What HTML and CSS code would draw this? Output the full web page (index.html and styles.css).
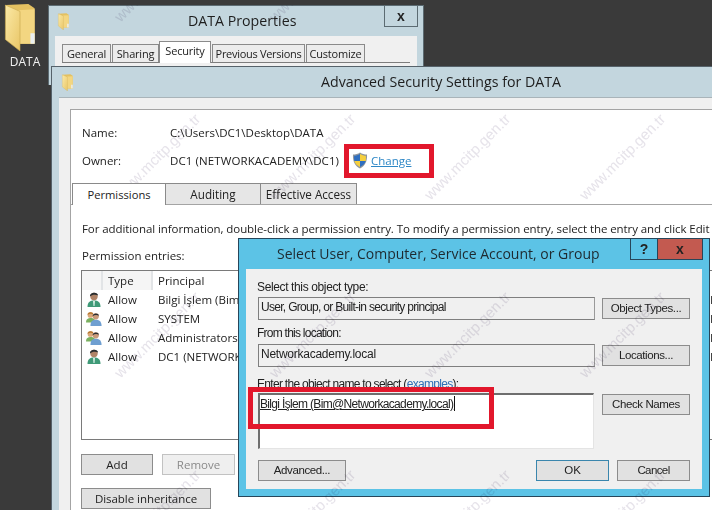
FILE: index.html
```html
<!DOCTYPE html>
<html lang="en">
<head>
<meta charset="utf-8">
<title>Advanced Security Settings for DATA</title>
<link rel="stylesheet" href="styles.css">
</head>
<body>
<svg class="defs" width="0" height="0" aria-hidden="true">
  <defs>
    <linearGradient id="fold" x1="0" y1="0" x2="1" y2="1">
      <stop offset="0" stop-color="#fbe9a6"/>
      <stop offset="1" stop-color="#e9c667"/>
    </linearGradient>
    <symbol id="folder" viewBox="0 0 30 46">
      <path d="M1 2 L23 1 L29 5 L29 39 L11 39 Z" fill="#e4c161"/>
      <path d="M13 7 L29 6 L29 39 L13 39 Z" fill="#f3d681"/>
      <path d="M1 2 L15 8 L15 46 L1 35 Z" fill="url(#fold)" stroke="#c9a94e" stroke-width=".6"/>
      <rect x="25" y="29" width="4" height="10" fill="#e9eef0"/>
    </symbol>
    <symbol id="user" viewBox="0 0 16 17">
      <path d="M1.500 16 C1.500 11 4 9.500 8 9.500 C12 9.500 14.500 11 14.500 16 Z" fill="#3f9a78"/>
      <path d="M7 10 L9 10 L8.500 15 L7.500 15 Z" fill="#d9efe6"/>
      <circle cx="8" cy="5.500" r="3.700" fill="#b08468"/>
      <path d="M4 5.500 C3.500 1 12 .5 12 4.500 C10 3.500 6 3.500 4 5.500 Z" fill="#2a2e31"/>
    </symbol>
    <symbol id="group" viewBox="0 0 18 17">
      <path d="M0 13 C0 9 2.500 8 5.500 8 C8.500 8 10.500 9 10.500 13 Z" fill="#7ab05f"/>
      <circle cx="5" cy="4.500" r="3.200" fill="#d9a778"/>
      <path d="M1.800 4.500 C1.500 .5 8.500 .5 8.300 4 C6.500 2.800 3.500 3 1.800 4.500 Z" fill="#b7782f"/>
      <path d="M5 17 C5 11.500 7.500 10 11 10 C14.500 10 17.500 11.500 17.500 17 Z" fill="#6f9fd1"/>
      <circle cx="11" cy="6" r="3.500" fill="#c99a7a"/>
      <path d="M7.500 6 C7 2 14.500 1.500 14.500 5.500 C12.500 4.300 9.500 4.300 7.500 6 Z" fill="#2a2e31"/>
    </symbol>
  </defs>
</svg>

<div class="desktop-icon">
  <svg class="folder-large"><use href="#folder"/></svg>
  <span>DATA</span>
</div>

<section class="window props">
  <header class="title props-title">
    <svg class="folder-small"><use href="#folder"/></svg>
    <h2>DATA Properties</h2>
    <button class="caption-close">x</button>
  </header>
  <div class="props-body">
    <nav class="props-tabs">
      <span class="t-general">General</span><span class="t-sharing">Sharing</span><span class="t-security on">Security</span><span class="t-previous">Previous Versions</span><span class="t-customize">Customize</span>
    </nav>
  </div>
</section>

<section class="window advanced">
  <header class="title adv-title">
    <svg class="folder-small"><use href="#folder"/></svg>
    <h1>Advanced Security Settings for DATA</h1>
  </header>
  <div class="adv-body">
    <div class="adv-panel">
      <dl class="meta">
        <dt>Name:</dt><dd>C:\Users\DC1\Desktop\DATA</dd>
        <dt>Owner:</dt>
        <dd class="owner"><span class="owner-name">DC1 (NETWORKACADEMY\DC1)</span>
          <svg class="shield" viewBox="0 0 16 17" aria-hidden="true">
            <path d="M8 .5 C10 2 12.500 2.500 15 2.500 C15.500 9 13 14 8 16.500 C3 14 .5 9 1 2.500 C3.500 2.500 6 2 8 .5 Z" fill="#8f969c"/>
            <path d="M8 2 L8 9 L2.300 9 C2 7 2 5.500 2.200 3.800 C4 3.700 6 3.200 8 2 Z" fill="#2f6fc0"/>
            <path d="M8 2 C10 3.200 12 3.700 13.800 3.800 C14 5.500 14 7 13.700 9 L8 9 Z" fill="#f5cf3d"/>
            <path d="M2.300 9 L8 9 L8 15 C5 13.500 3 11.500 2.300 9 Z" fill="#f5cf3d"/>
            <path d="M8 9 L13.700 9 C13 11.500 11 13.500 8 15 Z" fill="#2f6fc0"/>
          </svg>
          <a href="#">Change</a>
        </dd>
      </dl>
      <nav class="adv-tabs">
        <span class="on">Permissions</span><span>Auditing</span><span>Effective Access</span>
      </nav>
      <div class="perm">
        <p class="info">For additional information, double-click a permission entry. To modify a permission entry, select the entry and click Edit</p>
        <p class="entries-label">Permission entries:</p>
        <div class="list">
          <div class="row head"><span></span><span>Type</span><span>Principal</span></div>
          <div class="row"><svg class="ico"><use href="#user"/></svg><span>Allow</span><span>Bilgi İşlem (Bim</span></div>
          <div class="row"><svg class="ico"><use href="#group"/></svg><span>Allow</span><span>SYSTEM</span></div>
          <div class="row"><svg class="ico"><use href="#group"/></svg><span>Allow</span><span>Administrators</span></div>
          <div class="row"><svg class="ico"><use href="#user"/></svg><span>Allow</span><span>DC1 (NETWORK</span></div>
        </div>
        <div class="perm-actions">
          <button class="btn add">Add</button>
          <button class="btn remove" disabled>Remove</button>
        </div>
        <button class="btn inherit">Disable inheritance</button>
      </div>
    </div>
  </div>
</section>

<section class="window dialog">
  <header class="dlg-title">
    <h2>Select User, Computer, Service Account, or Group</h2>
    <div class="dlg-caption"><button class="help">?</button><button class="close">x</button></div>
  </header>
  <div class="dlg-body">
    <label class="select">Select this object type:</label>
    <div class="field-row">
      <div class="readonly squeeze">User, Group, or Built-in security principal</div>
      <button class="btn dlg-btn">Object Types...</button>
    </div>
    <label class="from">From this location:</label>
    <div class="field-row">
      <div class="readonly">Networkacademy.local</div>
      <button class="btn dlg-btn">Locations...</button>
    </div>
    <label class="enter">Enter the object name to select (<a href="#">examples</a>):</label>
    <div class="field-row top">
      <div class="names"><u>Bilgi İşlem (Bim@Networkacademy.local)</u><i class="caret"></i></div>
      <button class="btn dlg-btn check">Check Names</button>
    </div>
    <div class="dlg-actions">
      <button class="btn dlg-btn">Advanced...</button>
      <span class="spacer"></span>
      <button class="btn ok">OK</button>
      <button class="btn cancel">Cancel</button>
    </div>
  </div>
</section>

<div class="mark mark-change"></div>
<div class="mark mark-name"></div>

<div class="watermarks" aria-hidden="true">
  <div class="wm-grid">
    <span>www.mcitp.gen.tr</span><span>www.mcitp.gen.tr</span><span>www.mcitp.gen.tr</span><span>www.mcitp.gen.tr</span><span>www.mcitp.gen.tr</span>
    <span>www.mcitp.gen.tr</span><span>www.mcitp.gen.tr</span><span>www.mcitp.gen.tr</span><span>www.mcitp.gen.tr</span><span>www.mcitp.gen.tr</span>
    <span>www.mcitp.gen.tr</span><span>www.mcitp.gen.tr</span><span>www.mcitp.gen.tr</span><span>www.mcitp.gen.tr</span><span>www.mcitp.gen.tr</span>
    <span>www.mcitp.gen.tr</span><span>www.mcitp.gen.tr</span><span>www.mcitp.gen.tr</span><span>www.mcitp.gen.tr</span><span>www.mcitp.gen.tr</span>
  </div>
</div>
</body>
</html>
```
FILE: styles.css
```css
* { box-sizing: border-box; }
html, body { margin: 0; padding: 0; }
body {
  position: relative;
  width: 712px;
  height: 510px;
  overflow: hidden;
  background: #3a3a3a;
  font-family: "Open Sans", "Noto Sans", sans-serif;
  font-size: 12px;
  color: #222;
}
.defs { position: absolute; }
h1, h2, p, dl, dd { margin: 0; font-weight: 400; }
button { font: inherit; color: inherit; margin: 0; padding: 0; }
a { color: #2a80c0; }

.desktop-icon {
  position: absolute;
  left: 4px;
  top: 3px;
  width: 42px;
  display: flex;
  flex-direction: column;
  align-items: center;
  color: #f2f2f2;
  font-size: 12px;
  line-height: 16px;
}
.desktop-icon span { margin-top: 3px; }
.folder-large { width: 32px; height: 48px; margin-left: -11px; }
.folder-small { width: 13px; height: 17px; flex: none; }

.window { position: absolute; }

.props {
  left: 48px;
  top: 5px;
  width: 376px;
  height: 80px;
  background: #c3d6de;
  border: 1px solid #5c6b72;
  border-bottom: 0;
  padding: 0 6px;
}
.title { display: flex; align-items: center; position: relative; }
.title h1, .title h2 { flex: 1; color: #1e1e1e; white-space: nowrap; }
.props-title { height: 30px; padding: 0 0 0 2px; }
.props-title h2 { font-size: 14.2px; margin-left: 118px; margin-top: -1px; }
.caption-close {
  position: absolute;
  right: -1px;
  top: -1px;
  width: 34px;
  height: 22px;
  background: #c3d6de;
  border: 1px solid #5c6b72;
  font-family: "Liberation Sans", sans-serif;
  font-weight: 700;
  font-size: 14px;
  line-height: 16px;
}
.props-body { height: 50px; background: #f0f0f0; padding: 7px 7px 0 7px; }
.props-tabs { display: flex; align-items: flex-end; height: 20px; border-bottom: 1px solid #7d7d7d; }
.props-tabs span {
  height: 18px;
  background: #ececec;
  border: 1px solid #8a8a8a;
  border-bottom: 0;
  font-size: 11px;
  line-height: 17px;
  letter-spacing: -.2px;
  text-align: center;
  white-space: nowrap;
}
.props-tabs .t-general { width: 49px; margin-right: 1px; }
.props-tabs .t-sharing { width: 47px; }
.props-tabs .t-security { width: 52px; margin-right: 1px; height: 22px; line-height: 18px; background: #fff; position: relative; top: 1px; }
.props-tabs .t-previous { width: 93px; margin-right: 1px; letter-spacing: -.3px; }
.props-tabs .t-customize { width: 59px; }

.advanced {
  left: 51px;
  top: 66px;
  width: 661px;
  height: 444px;
  overflow: hidden;
  background: #c3d6de;
  border: 1px solid #56626a;
  border-right: 0;
  border-bottom: 0;
}
.adv-title { height: 30px; padding-left: 9px; }
.adv-title h1 { font-size: 14.2px; margin-left: 247px; margin-top: -1px; }
.adv-body { margin-left: 7px; height: 420px; background: #f0f0f0; padding: 11px 0 0 11px; border-top: 1px solid #a9b4b9; }
.adv-panel { height: 100%; background: #fff; border-top: 1px solid #a4a4a4; border-left: 1px solid #a4a4a4; padding-top: 14px; }

.meta {
  display: grid;
  grid-template-columns: 88px 1fr;
  row-gap: 11px;
  padding-left: 11px;
  line-height: 17px;
  font-size: 11.5px;
}
.owner { display: flex; align-items: center; }
.owner-name { width: 182px; flex: none; white-space: nowrap; letter-spacing: .1px; }
.shield { width: 16px; height: 17px; flex: none; }
.owner a { margin-left: 3px; color: #2d87c6; }

.adv-tabs { display: flex; align-items: flex-end; height: 21px; margin-top: 15px; padding-left: 1px; border-bottom: 1px solid #a4a4a4; }
.adv-tabs span {
  width: 95px;
  height: 21px;
  background: #e6e6e6;
  border: 1px solid #8a8a8a;
  border-bottom: 0;
  border-left: 0;
  text-align: center;
  line-height: 21px;
  font-size: 11.7px;
  white-space: nowrap;
}
.adv-tabs span:first-child { width: 94px; border-left: 1px solid #8a8a8a; background: #fff; position: relative; z-index: 1; height: 22px; margin-bottom: -1px; font-size: 11.2px; }
.adv-tabs span:nth-child(3) { width: 96px; }

.perm { padding: 16px 0 0 10px; }
.info { font-size: 11.5px; line-height: 16px; white-space: nowrap; letter-spacing: -.08px; padding-left: 1px; }
.entries-label { margin-top: 11px; font-size: 11.5px; line-height: 16px; padding-left: 1px; }
.list { width: 640px; height: 170px; margin-top: 6px; border: 1px solid #7a7a7a; background: #fff; }
.row { display: grid; grid-template-columns: 21px 50px 558px 2px; height: 19px; align-items: center; line-height: 19px; font-size: 11.5px; white-space: nowrap; }
.row::after { content: ""; height: 8px; background: #444; }
.row span:nth-child(2) { padding-left: 5px; }
.row span:nth-child(3) { padding-left: 5px; }
.row.head { height: 19px; }
.row.head::after { display: none; }
.row.head span { height: 19px; background: #f5f5f5; border-right: 2px solid #e2e4e6; }
.row.head span:nth-child(3) { background: #fff; border-right: 0; }
.ico { width: 16px; height: 17px; margin-left: 4px; }

.btn { background: #e1e1e1; border: 1px solid #8c8c8c; height: 21px; line-height: 19px; text-align: center; white-space: nowrap; font-size: 11.5px; }
.perm-actions { display: flex; gap: 9px; margin-top: 14px; }
.add { width: 72px; }
.remove { width: 73px; color: #8a8a8a; background: #efefef; border-color: #c2c2c2; }
.inherit { width: 130px; display: block; margin-top: 13px; letter-spacing: -.05px; }

.dialog {
  left: 238px;
  top: 238px;
  width: 472px;
  height: 259px;
  background: #5cc3e6;
  border: 1px solid #27465a;
  padding: 0 7px 7px;
}
.dlg-title { height: 30px; display: flex; position: relative; }
.dlg-title h2 { font-size: 14px; margin-left: 31px; line-height: 30px; color: #1e2a30; white-space: nowrap; }
.dlg-caption { position: absolute; right: -1px; top: 0; display: flex; }
.dlg-caption button { height: 21px; font-family: "Liberation Sans", sans-serif; font-weight: 700; font-size: 14px; line-height: 14px; }
.help { width: 28px; background: #5cc3e6; border: 1px solid #27465a; border-top: 0; }
.close { width: 45px; background: #c35a50; border: 1px solid #27465a; border-top: 0; border-left: 0; }

.dlg-body {
  height: 220px;
  background: #f0f0f0;
  padding: 10px 12px 0 12px;
  font-family: "Liberation Sans", sans-serif;
  font-size: 12px;
  letter-spacing: -.25px;
}
.dlg-body label { display: block; line-height: 16px; margin-left: -1px; white-space: nowrap; }
.dlg-body .select { letter-spacing: -.37px; }
.dlg-body .from { margin-top: 5px; letter-spacing: -.75px; }
.dlg-body .from + .field-row { margin-top: 3px; }
.dlg-body .enter { margin-top: 9px; letter-spacing: -.7px; }
.dlg-body a { color: #2f6fb5; text-decoration: none; }
.field-row { display: flex; align-items: center; gap: 7px; margin-top: 2px; }
.field-row.top { align-items: flex-start; margin-top: 1px; }
.readonly { width: 337px; height: 23px; padding-left: 2px; line-height: 18px; background: #f0f0f0; border: 1px solid #7f7f7f; border-right-color: #9a9a9a; white-space: nowrap; }
.squeeze { letter-spacing: -.7px; }
.names { width: 336px; height: 56px; padding: 1px 0 0 0; line-height: 16px; background: #fff; border: 1px solid #e4e4e4; border-top: 2px solid #6e6e6e; border-left: 2px solid #6e6e6e; display: flex; align-items: flex-start; white-space: nowrap; letter-spacing: -.67px; }
.caret { display: block; width: 1px; height: 15px; margin-left: 1px; background: #111; }
.dlg-btn { width: 88px; letter-spacing: -.4px; }
.field-row.top .dlg-btn { margin-top: 1px; margin-left: 1px; }
.dlg-actions { display: flex; margin-top: 11px; }
.spacer { flex: 1; }
.ok { width: 73px; border-color: #3a86ad; }
.cancel { width: 73px; margin-left: 8px; letter-spacing: -.6px; }

.mark { position: absolute; border: 5px solid #e2172c; }
.mark-change { left: 344px; top: 144px; width: 90px; height: 34px; }
.mark-name { left: 248px; top: 387px; width: 246px; height: 42px; }

.watermarks {
  position: absolute;
  inset: 0;
  overflow: hidden;
  pointer-events: none;
  mix-blend-mode: multiply;
  clip-path: polygon(49px 5px, 424px 5px, 424px 67px, 712px 67px, 712px 510px, 51px 510px, 51px 67px, 49px 67px);
}
.wm-grid {
  margin: -111px 0 0 -75px;
  display: grid;
  grid-template-columns: repeat(5, 155px);
  grid-template-rows: repeat(4, 178px);
}
.wm-grid span {
  place-self: center;
  transform: rotate(-45deg);
  font-family: "Liberation Sans", sans-serif;
  font-size: 15px;
  white-space: nowrap;
  color: #e6e3ea;
}
```
